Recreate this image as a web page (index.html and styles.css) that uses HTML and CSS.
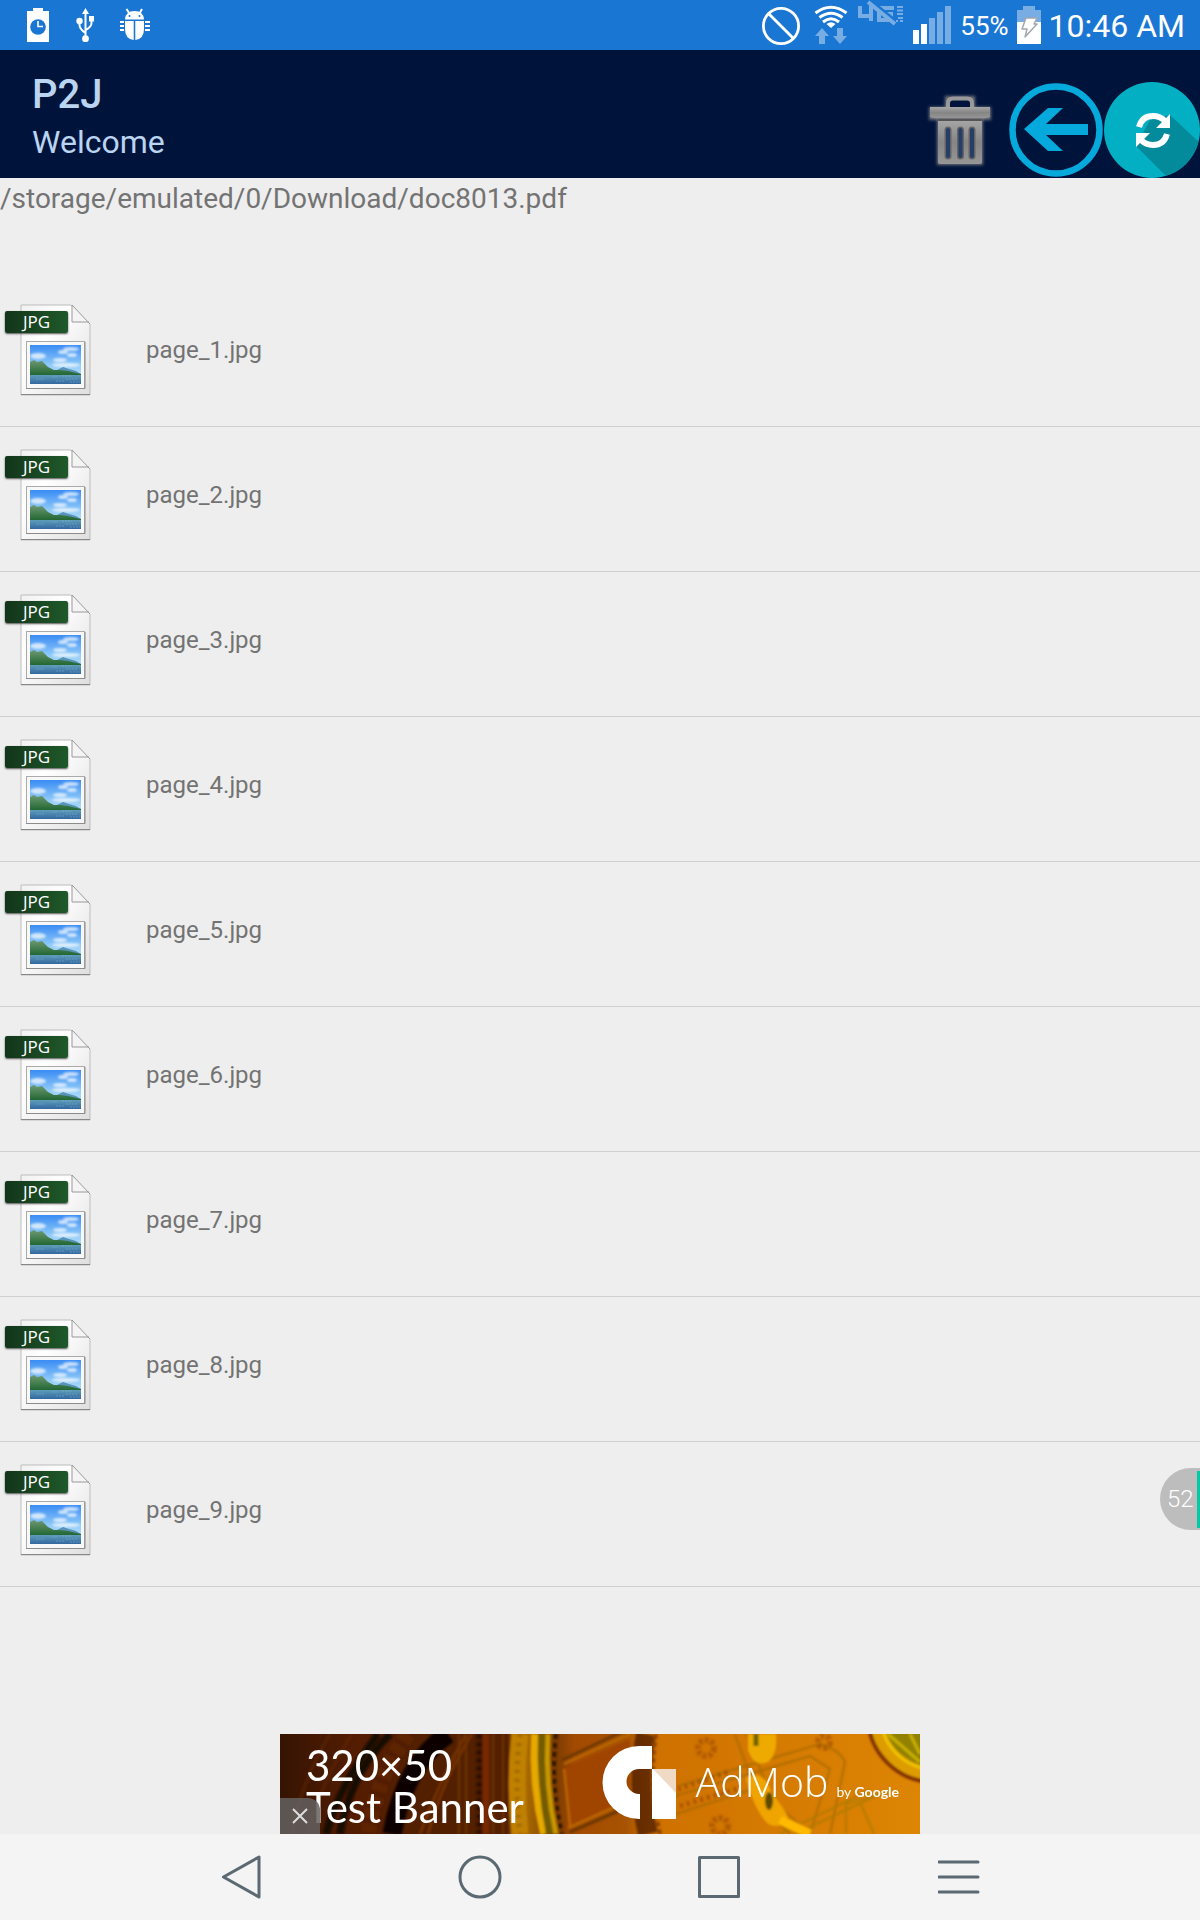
FILE: index.html
```html
<!DOCTYPE html>
<html lang="en">
<head>
<meta charset="utf-8">
<meta name="viewport" content="width=device-width, initial-scale=1">
<title>P2J</title>
<link rel="stylesheet" href="styles.css">
</head>
<body>
<svg class="defs" width="0" height="0" aria-hidden="true">
  <defs>
    <linearGradient id="paper" x1="0" y1="0" x2="1" y2="1"><stop offset="0" stop-color="#f1f1f1"/><stop offset=".35" stop-color="#fff"/><stop offset="1" stop-color="#dedede"/></linearGradient>
    <linearGradient id="sky" x1="0" y1="0" x2="0" y2="1"><stop offset="0" stop-color="#3a8cf4"/><stop offset=".5" stop-color="#8cc8f8"/><stop offset="1" stop-color="#d8f1fb"/></linearGradient>
    <linearGradient id="sea" x1="0" y1="0" x2="0" y2="1"><stop offset="0" stop-color="#5f9dba"/><stop offset="1" stop-color="#3268a0"/></linearGradient>
    <linearGradient id="hill" x1="0" y1="0" x2="0" y2="1"><stop offset="0" stop-color="#6f9a72"/><stop offset="1" stop-color="#1d632f"/></linearGradient>
    <filter id="cloud"><feGaussianBlur stdDeviation="1"/></filter>
    <symbol id="photo-file" viewBox="0 0 92 100">
      <path d="M21 5H71L90 24V95H21Z" fill="url(#paper)" stroke="#bdbdbd"/>
      <path d="M21 94.500H90" stroke="#888" stroke-width="1"/>
      <path d="M72 5V22H89" fill="#f4f4f4" stroke="#999"/>
      <path d="M72 5L90 24" stroke="#999"/>
      <rect x="26.500" y="41.500" width="58" height="47" fill="#f8f8f8" stroke="#aaa"/>
      <path d="M26 88.500H85V42" fill="none" stroke="#8c8c8c"/>
      <rect x="30" y="45" width="51" height="39" fill="url(#sky)"/>
      <g fill="#fff" opacity=".7" filter="url(#cloud)"><ellipse cx="71" cy="49" rx="8" ry="2"/><ellipse cx="63" cy="52" rx="5" ry="2"/><ellipse cx="72" cy="55" rx="5" ry="2"/><ellipse cx="38" cy="56" rx="8" ry="3"/><ellipse cx="60" cy="60" rx="7" ry="2"/><ellipse cx="66" cy="65" rx="14" ry="2"/></g>
      <path d="M50 72L57 70L63 67L69 69L76 71L81 74V76H50Z" fill="#5794b8"/>
      <path d="M30 62L34 60L37 62L42 61L48 67L54 70L60 70L68 71L81 74V76H30Z" fill="url(#hill)"/>
      <rect x="30" y="75" width="51" height="9" fill="url(#sea)"/>
      <path d="M52 77H58M62 76H72M66 79H78M56 81H64M70 82H80M36 79H44" stroke="#91bdd5" stroke-dasharray="2 1" opacity=".4"/>
    </symbol>
  </defs>
</svg>

<header class="status">
  <div class="status-group status-left">
    <svg width="24" height="50" viewBox="26 0 24 50" aria-hidden="true"><path d="M27 11H33V8H43V11H49V42H27Z" fill="#fff"/><circle cx="38" cy="27" r="7.800" fill="#1a76d3"/><path d="M38 21V26.500H43" fill="none" stroke="#fff" stroke-width="1.600"/></svg>
    <svg width="24" height="50" viewBox="73 0 24 50" aria-hidden="true"><g fill="none" stroke="#fff" stroke-width="2"><path d="M85.500 12V38M79.500 22V25Q79.500 29 85.500 33M91.500 20V23Q91.500 27 85.500 30"/></g><g fill="#fff"><path d="M85.500 8L89 14H82Z"/><circle cx="79.500" cy="21" r="3.200"/><rect x="89" y="16" width="5" height="5.500"/><circle cx="85.500" cy="38.700" r="3.400"/></g></svg>
    <svg width="32" height="50" viewBox="120 0 32 50" aria-hidden="true"><g fill="#fff"><path d="M125 19.500Q125.500 11 134.500 11Q143.500 11 144 19.500Z"/><path d="M125 21H133.700V40Q125 39 125 29ZM135.300 21H144V29Q144 39 135.300 40Z"/></g><path d="M126.500 9L129.500 13.500M142 9L139.500 13.500M120 22H124M120 26H124M120 30H124M145 22H150M145 26H150M145 30H150" stroke="#fff" stroke-width="2"/><circle cx="129.500" cy="16" r="1" fill="#1a76d3"/><circle cx="139.500" cy="16" r="1" fill="#1a76d3"/></svg>
  </div>
  <div class="status-group">
    <svg width="44" height="50" viewBox="760 0 44 50" aria-hidden="true"><g fill="none" stroke="#fff" stroke-width="2.800"><circle cx="781" cy="26" r="17.600"/><path d="M768.500 13.500L793.500 38.500"/></g></svg>
    <svg width="36" height="50" viewBox="812 0 36 50" aria-hidden="true"><g fill="none" stroke="#fff" stroke-width="3"><path d="M815.500 13Q831 1.500 846.500 13"/><path d="M819.500 17.500Q831 9 842.500 17.500"/><path d="M823 22Q831 15.500 839 22"/></g><path d="M826.500 24Q831 20.500 835.500 24L831 28Z" fill="#fff"/><path d="M822 28L829 36H825V44H819V36H815ZM840 44L847 36H843V28H837V36H833Z" fill="#78ade4"/></svg>
    <svg width="48" height="50" viewBox="856 0 48 50" aria-hidden="true"><g fill="none" stroke="#78ade4" stroke-width="4"><path d="M860 6V16H870M871 6V21M894 8H879V20H891V14H885"/><path d="M870 0L897 22" stroke="#1a76d3" stroke-width="3"/><path d="M868 2L895 24"/></g><path d="M897 7H903M897 10.500H903M897 14H903M898 18H903M896 21H898M900 21H903" stroke="#78ade4" stroke-width="2"/></svg>
    <svg width="40" height="50" viewBox="912 0 40 50" aria-hidden="true"><path d="M913 30H919V44H913ZM921 24H927V44H921Z" fill="#fff"/><path d="M929 18H935V44H929ZM937 12H943V44H937ZM945 6H951V44H945Z" fill="#78ade4"/></svg>
    <span class="battery-level">55%</span>
    <svg width="24" height="50" viewBox="1016 0 24 50" aria-hidden="true"><path d="M1016 10H1022V6H1034V10H1040V22H1016Z" fill="#78ade4"/><path d="M1016 22H1040V44H1016Z" fill="#fff"/><path d="M1025 18H1036L1033 24H1036L1024 37L1026 29H1021Z" fill="#fff" stroke="#a3a8ad" stroke-width="1.500" stroke-linejoin="round"/></svg>
    <time class="clock">10:46 AM</time>
  </div>
</header>

<div class="appbar">
  <div class="titles">
    <h1 class="title">P2J</h1>
    <p class="subtitle">Welcome</p>
  </div>
  <button class="action" type="button" aria-label="Delete">
    <svg width="96" height="96" viewBox="912 82 96 96" aria-hidden="true">
      <defs><linearGradient id="metal" x1="0" y1="0" x2="0" y2="1"><stop offset="0" stop-color="#a6a6a6"/><stop offset=".5" stop-color="#858585"/><stop offset="1" stop-color="#969696"/></linearGradient><filter id="halo" x="-20%" y="-20%" width="140%" height="140%"><feGaussianBlur stdDeviation="1.500"/></filter></defs>
      <g fill="#70727b" filter="url(#halo)"><path d="M929 107H945V96H975V107H991V120H983V165H937V120H929Z"/></g>
      <path d="M948 107V103Q948 98.500 953 98.500H967Q972 98.500 972 103V107" fill="#00143b" stroke="#999" stroke-width="4"/>
      <path d="M930 107H990V117Q985 119 980 118H940Q934 119 930 117Z" fill="url(#metal)"/>
      <path d="M938 120H982V162Q982 164 980 164H940Q938 164 938 162Z" fill="url(#metal)"/>
      <path d="M938 120H982" stroke="#555" stroke-width="2"/>
      <path d="M948 130V156M960.500 130V156M972 130V156" stroke="#646464" stroke-width="7" stroke-linecap="round"/>
      <path d="M948 130V156M960.500 130V156M972 130V156" stroke="#263d68" stroke-width="4" stroke-linecap="round"/>
    </svg>
  </button>
  <button class="action" type="button" aria-label="Back">
    <svg width="96" height="96" viewBox="1008 82 96 96" aria-hidden="true"><circle cx="1056" cy="130" r="43.500" fill="none" stroke="#05a9dc" stroke-width="6.500"/><path d="M1024 129L1048 108H1063L1046 124H1088V135H1046L1063 151H1048Z" fill="#05a9dc"/></svg>
  </button>
  <button class="action" type="button" aria-label="Refresh">
    <svg width="96" height="96" viewBox="1104 82 96 96" aria-hidden="true"><defs><clipPath id="disc"><circle cx="1152" cy="130" r="48"/></clipPath></defs><circle cx="1152" cy="130" r="48" fill="#03afc3"/><path clip-path="url(#disc)" d="M1170 115L1220 162V200H1190L1136 146L1150 120Z" fill="#038a9b"/><g fill="none" stroke="#fff" stroke-width="6"><path d="M1139 127Q1142 116 1153 116Q1160 116 1165 121"/><path d="M1167 134Q1164 145 1153 145Q1146 145 1141 140"/></g><path d="M1170 114V128H1156ZM1136 147V133H1150Z" fill="#fff"/></svg>
  </button>
</div>

<main class="content">
  <p class="path">/storage/emulated/0/Download/doc8013.pdf</p>
  <ul class="files">
    <li class="file"><span class="thumb"><svg width="92" height="100" aria-hidden="true"><use href="#photo-file"/></svg><span class="tag">JPG</span></span><span class="name">page_1.jpg</span></li>
    <li class="file"><span class="thumb"><svg width="92" height="100" aria-hidden="true"><use href="#photo-file"/></svg><span class="tag">JPG</span></span><span class="name">page_2.jpg</span></li>
    <li class="file"><span class="thumb"><svg width="92" height="100" aria-hidden="true"><use href="#photo-file"/></svg><span class="tag">JPG</span></span><span class="name">page_3.jpg</span></li>
    <li class="file"><span class="thumb"><svg width="92" height="100" aria-hidden="true"><use href="#photo-file"/></svg><span class="tag">JPG</span></span><span class="name">page_4.jpg</span></li>
    <li class="file"><span class="thumb"><svg width="92" height="100" aria-hidden="true"><use href="#photo-file"/></svg><span class="tag">JPG</span></span><span class="name">page_5.jpg</span></li>
    <li class="file"><span class="thumb"><svg width="92" height="100" aria-hidden="true"><use href="#photo-file"/></svg><span class="tag">JPG</span></span><span class="name">page_6.jpg</span></li>
    <li class="file"><span class="thumb"><svg width="92" height="100" aria-hidden="true"><use href="#photo-file"/></svg><span class="tag">JPG</span></span><span class="name">page_7.jpg</span></li>
    <li class="file"><span class="thumb"><svg width="92" height="100" aria-hidden="true"><use href="#photo-file"/></svg><span class="tag">JPG</span></span><span class="name">page_8.jpg</span></li>
    <li class="file"><span class="thumb"><svg width="92" height="100" aria-hidden="true"><use href="#photo-file"/></svg><span class="tag">JPG</span></span><span class="name">page_9.jpg</span><span class="bubble">52</span></li>
  </ul>
</main>

<aside class="ad">
  <svg class="ad-art" viewBox="0 0 640 100" preserveAspectRatio="xMidYMid slice" aria-hidden="true">
    <defs>
      <linearGradient id="gold"><stop offset="0" stop-color="#351402"/><stop offset=".12" stop-color="#541d02"/><stop offset=".25" stop-color="#522000"/><stop offset=".355" stop-color="#542000"/><stop offset=".37" stop-color="#b97800"/><stop offset=".43" stop-color="#7a3c02"/><stop offset=".46" stop-color="#a34a02"/><stop offset=".54" stop-color="#a75302"/><stop offset=".58" stop-color="#ce7100"/><stop offset="1" stop-color="#dd8504"/></linearGradient>
      <filter id="soft"><feGaussianBlur stdDeviation="1.200"/></filter>
    </defs>
    <rect width="640" height="100" fill="url(#gold)"/>
    <g filter="url(#soft)" fill="none">
      <path d="M110 0Q70 40 60 100M98 0Q60 50 46 100" stroke="#180800" stroke-width="7"/>
      <path d="M72 0Q40 50 28 100M50 0Q20 50 12 100" stroke="#6a2a02" stroke-width="4" opacity=".4"/>
      <path d="M128 0Q96 46 88 100" stroke="#6a2a05" stroke-width="16" stroke-dasharray="9 5" opacity=".5"/>
      <path d="M168 0Q125 30 112 100" stroke="#100500" stroke-width="19"/>
      <path d="M140 100Q158 50 186 0M148 100Q163 45 192 0" stroke="#8a3c04" stroke-width="3" opacity=".6"/>
      <path d="M179 0V100M186 0V100M213 0V100M223 0V100" stroke="#703600" stroke-width="3" opacity=".7"/>
      <path d="M199 0V100" stroke="#2e0e00" stroke-width="5" stroke-dasharray="5 3"/>
      <path d="M206 0V100" stroke="#7a2a00" stroke-width="6"/>
      <path d="M240 0Q234 50 240 100" stroke="#c08000" stroke-width="17"/>
      <path d="M240 0Q234 50 240 100" stroke="#a06a00" stroke-width="5" stroke-dasharray="3 6"/>
      <path d="M255 0Q252 50 264 100" stroke="#e5a900" stroke-width="8"/>
      <path d="M262 0Q260 50 270 100" stroke="#735c00" stroke-width="8"/>
      <path d="M268 0Q265 50 276 100" stroke="#c89700" stroke-width="5"/>
      <path d="M276 0Q270 50 282 100" stroke="#321500" stroke-width="4" stroke-dasharray="5 4"/>
      <path d="M284 35L350 5V65L290 92Z" fill="#a04400"/>
      <path d="M284 30L350 0M288 94L350 66M284 35L290 92" stroke="#bd6c04" stroke-width="2"/>
      <path d="M282 26L350 -6M290 98L350 72" stroke="#6c3902" stroke-width="3"/>
      <path d="M366 0Q356 50 368 100" stroke="#4b1b00" stroke-width="20" opacity=".75"/>
      <path d="M376 0Q368 50 380 100" stroke="#8d4200" stroke-width="4" stroke-dasharray="5 3"/>
      <path d="M398 52L540 10Q560 16 565 28L550 100M395 62L530 22L550 35L530 100M390 82L470 56M455 0L480 70L510 100M467 0L492 66L530 100" stroke="#a36a00" stroke-width="2" opacity=".75"/>
      <path d="M398 55L448 38M400 72L460 54" stroke="#9a4900" stroke-width="5" stroke-dasharray="3 4" opacity=".7"/>
      <path d="M468 0H496Q498 20 488 28Q474 34 468 16Z" fill="#efaa00"/>
      <path d="M466 44Q484 34 492 60Q506 76 508 84Q500 96 488 90Q474 76 466 44Z" fill="#f0a400"/>
      <ellipse cx="489" cy="67" rx="4" ry="9" fill="#5d4b00"/>
      <path d="M476 0V12" stroke="#6e6400" stroke-width="5"/>
      <path d="M500 100L590 56M515 100L604 58M566 100V70L612 56M594 100L580 68" stroke="#ac7a00" stroke-width="2" opacity=".8"/>
      <path d="M500 86L530 100" stroke="#ffba00" stroke-width="9"/>
      <g stroke="#9e4b00" stroke-width="6" stroke-dasharray="4 2" opacity=".6"><circle cx="426" cy="14" r="8"/><circle cx="440" cy="92" r="8"/><circle cx="544" cy="8" r="6"/></g>
      <circle cx="654" cy="-18" r="58" fill="#928000" stroke="#dd9d03" stroke-width="15"/>
      <circle cx="654" cy="-18" r="66" stroke="#823200" stroke-width="4"/>
      <circle cx="654" cy="-18" r="53" stroke="#f0c400" stroke-width="3"/>
      <path d="M608 0L640 28M630 0L640 20" stroke="#c9b000" stroke-width="3"/>
    </g>
  </svg>
  <div class="ad-body">
    <p class="ad-text">320×50<br>Test Banner</p>
    <svg class="ad-logo" width="74" height="76" viewBox="602 1744 74 76" aria-hidden="true"><path d="M652 1746V1769H639A12.500 12.500 0 0 0 639 1794H640V1819H639A36.500 36.500 0 0 1 639 1746Z" fill="#fff"/><path d="M652 1769H676V1819H652Z" fill="#fff"/><path d="M653 1769H676V1793Z" fill="#f1dac5"/></svg>
    <p class="ad-brand">AdMob</p>
    <p class="ad-by">by <b>Google</b></p>
  </div>
  <button class="ad-close" type="button" aria-label="Close ad"><svg width="16" height="16" viewBox="0 0 16 16" aria-hidden="true"><path d="M1 1L15 15M15 1L1 15" stroke="#ddd" stroke-width="2"/></svg></button>
</aside>

<nav class="navbar">
  <button class="nav" type="button" aria-label="Back"><svg width="44" height="44" viewBox="0 0 44 44" aria-hidden="true"><path d="M5.500 22L41 2V42Z"/></svg></button>
  <button class="nav" type="button" aria-label="Home"><svg width="44" height="44" viewBox="0 0 44 44" aria-hidden="true"><circle cx="22" cy="22" r="20"/></svg></button>
  <button class="nav" type="button" aria-label="Recent apps"><svg width="44" height="44" viewBox="0 0 44 44" aria-hidden="true"><path d="M1.500 2.500H40.500V41.500H1.500Z"/></svg></button>
  <button class="nav" type="button" aria-label="Menu"><svg width="44" height="44" viewBox="0 0 44 44" aria-hidden="true"><path d="M1 7H40M1 22H40M1 37H40"/></svg></button>
</nav>
</body>
</html>
```
FILE: styles.css
```css
* { box-sizing: border-box; }

body {
  margin: 0;
  min-height: 100vh;
  display: flex;
  flex-direction: column;
  background: #eee;
  color: #737373;
  font-family: Roboto, "Liberation Sans", sans-serif;
}

h1, p, ul { margin: 0; padding: 0; }
svg { display: block; flex: none; }
.defs { position: absolute; }

button {
  border: 0;
  padding: 0;
  background: none;
  cursor: pointer;
}

.status {
  display: flex;
  justify-content: space-between;
  height: 50px;
  padding: 0 15px 0 26px;
  background: #1a76d3;
  color: #fff;
}
.status-group { display: flex; align-items: flex-start; gap: 8px; }
.status-left { gap: 23px; }
.battery-level { font-size: 26px; line-height: 52px; }
.clock { font-size: 32px; line-height: 52px; }

.appbar {
  display: flex;
  align-items: flex-end;
  height: 128px;
  background: #00143b;
  color: #bad4f1;
}
.titles { flex: 1; padding: 0 0 12px 32px; }
.title { font-size: 40px; line-height: 46px; font-weight: 500; }
.subtitle { font-size: 32px; line-height: 48px; }
.action { width: 96px; height: 96px; }

.content { flex: 1; }
.path { height: 104px; font-size: 28px; line-height: 42px; }

.files { list-style: none; }
.file {
  position: relative;
  display: flex;
  align-items: center;
  gap: 54px;
  height: 145px;
  padding-bottom: 8px;
  border-bottom: 1px solid #cfcfcf;
}
.thumb { position: relative; width: 92px; }
.tag {
  position: absolute;
  left: 5px;
  top: 11px;
  width: 63px;
  height: 22px;
  border-radius: 2px;
  background: linear-gradient(90deg, #12351a, #1f592a);
  box-shadow: 0 1px 2px #555;
  color: #fff;
  font: 17px/21px "Open Sans", sans-serif;
  text-align: center;
}
.name { font-size: 24px; line-height: 32px; }

.bubble {
  position: absolute;
  right: 0;
  top: 26px;
  width: 40px;
  height: 62px;
  padding-left: 7px;
  border-radius: 31px 0 0 31px;
  background: #bdbdbd;
  color: #fff;
  font-size: 24px;
  font-weight: 300;
  line-height: 62px;
}
.bubble::after {
  content: "";
  position: absolute;
  right: 0;
  top: 3px;
  width: 3px;
  height: 57px;
  background: #05c9a2;
}

.ad {
  position: relative;
  width: 100%;
  max-width: 640px;
  height: 100px;
  margin: 0 auto;
  overflow: hidden;
  color: #fff;
}
.ad-art { position: absolute; inset: 0; width: 100%; height: 100%; }
.ad-body {
  position: relative;
  display: flex;
  align-items: flex-start;
  height: 100px;
  padding: 10px 21px 0 26px;
}
.ad-text { flex: 1; font: 42px/42px Lato, sans-serif; }
.ad-brand { padding-left: 20px; font: 300 41px/75px "Open Sans", sans-serif; }
.ad-by { padding-left: 8px; font: 14px/96px Lato, sans-serif; }
.ad-close {
  position: absolute;
  left: 0;
  bottom: 0;
  display: flex;
  align-items: center;
  justify-content: center;
  width: 40px;
  height: 36px;
  border-radius: 0 12px 0 0;
  background: rgba(100, 96, 96, .85);
}

.navbar {
  display: flex;
  height: 86px;
  padding: 0 10%;
  background: #f4f4f4;
}
.nav { flex: 1; display: flex; align-items: center; justify-content: center; }
.nav svg { fill: none; stroke: #5b6973; stroke-width: 3; stroke-linejoin: round; stroke-linecap: round; }
```
